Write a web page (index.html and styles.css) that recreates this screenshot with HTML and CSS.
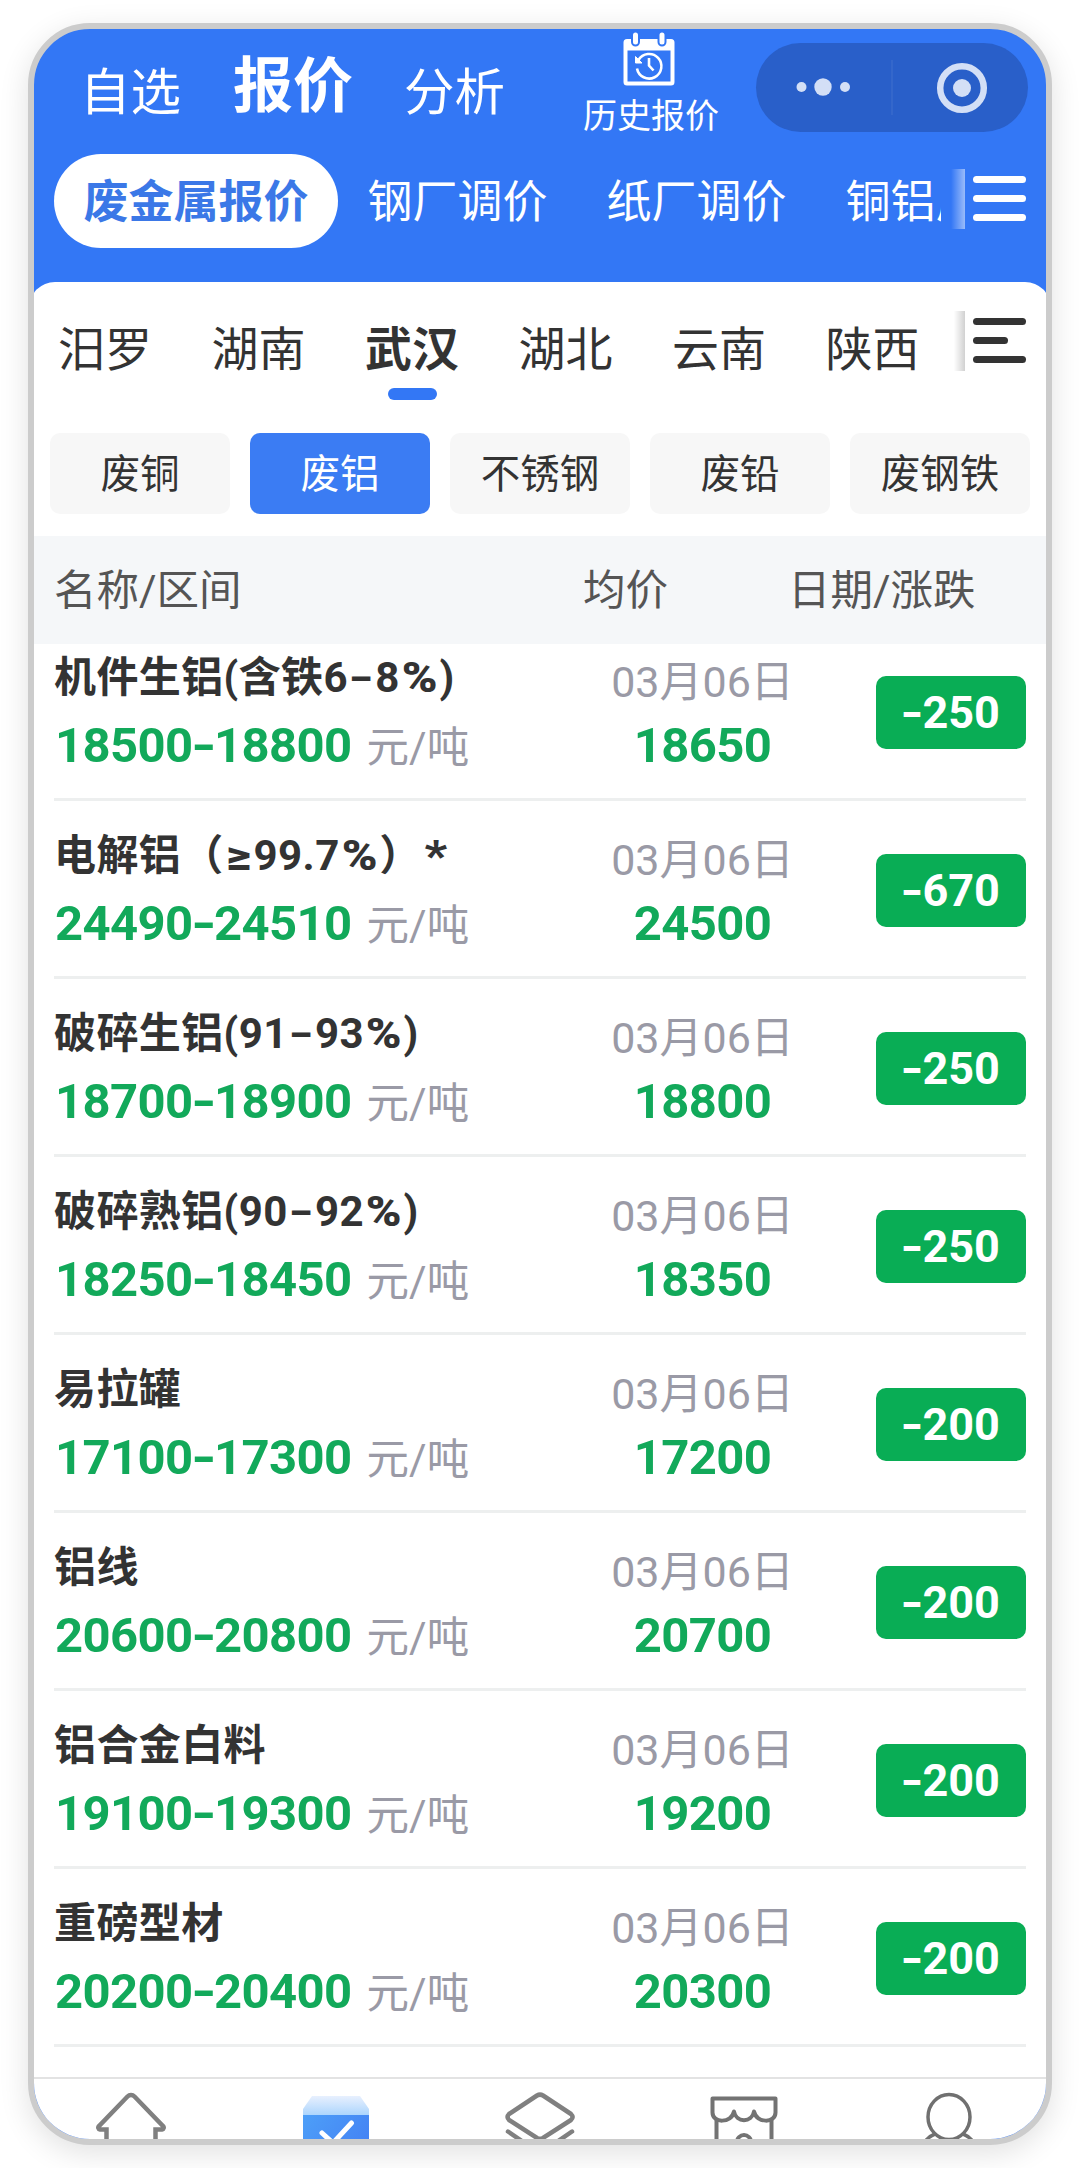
FILE: index.html
```
<!DOCTYPE html>
<html lang="zh-CN">
<head>
    <meta charset="UTF-8">
    <meta name="viewport" content="width=device-width, initial-scale=1.0">
    <title>报价</title>
    <link rel="stylesheet" href="styles.css">
</head>
<body>
    <div class="phone">
        <div class="header">
            <div class="nav">
                <span class="navItem first">自选</span>
                <span class="navItem active">报价</span>
                <span class="navItem">分析</span>
                <div class="history">
                    <svg width="52" height="54" viewBox="0 0 52 54">
                        <path d="M4 7h44a3.500 3.500 0 0 1 3.500 3.500V50a3.500 3.500 0 0 1-3.500 3.500H4A3.500 3.500 0 0 1 .5 50V10.500A3.500 3.500 0 0 1 4 7z" fill="#fff"/>
                        <path d="M4.500 18.500h43v31h-43z" fill="#3377f5"/>
                        <path d="M12.500 4v6M39 4v6" stroke="#3377f5" stroke-width="9" stroke-linecap="round"/>
                        <path d="M12.500 3v7M39 3v7" stroke="#fff" stroke-width="5" stroke-linecap="round"/>
                        <path d="M15.500 28A12.300 12.300 0 1 1 14 36.500" fill="none" stroke="#fff" stroke-width="2.600"/>
                        <path d="M12.500 24.500v6.500h6.500z" fill="#fff" stroke="#fff"/>
                        <path d="M26 26v7.500l4.500 5" fill="none" stroke="#fff" stroke-width="2.600"/>
                    </svg>
                    <span>历史报价</span>
                </div>
                <div class="capsule">
                    <svg width="272" height="88" viewBox="0 0 272 88">
                        <g fill="#d3dff6">
                            <circle cx="45.500" cy="44" r="5"/>
                            <circle cx="67" cy="44" r="8.700"/>
                            <circle cx="89" cy="44" r="5"/>
                            <circle cx="206" cy="45" r="9"/>
                        </g>
                        <path d="M136 17v55" stroke="#3467cb" stroke-width="2"/>
                        <circle cx="206" cy="45" r="21.800" fill="none" stroke="#d3dff6" stroke-width="6.500"/>
                    </svg>
                </div>
            </div>
            <div class="types">
                <div class="typeList">
                    <span class="type active">废金属报价</span>
                    <span class="type">钢厂调价</span>
                    <span class="type">纸厂调价</span>
                    <span class="type">铜铝厂调价</span>
                </div>
                <div class="fade"></div>
                <div class="menu"><i></i><i></i><i></i></div>
            </div>
        </div>

        <div class="panel">
            <div class="cities">
                <div class="cityList">
                    <span>汨罗</span>
                    <span>湖南</span>
                    <span class="active">武汉</span>
                    <span>湖北</span>
                    <span>云南</span>
                    <span>陕西</span>
                </div>
                <div class="fade dark"></div>
                <div class="menu dark"><i></i><i class="short"></i><i></i></div>
            </div>
            <div class="metals">
                <span>废铜</span>
                <span class="active">废铝</span>
                <span>不锈钢</span>
                <span>废铅</span>
                <span>废钢铁</span>
            </div>
            <div class="thead">
                <span class="colName">名称/区间</span>
                <span class="colAvg">均价</span>
                <span>日期/涨跌</span>
            </div>
            <div class="list" id="list"></div>
        </div>

        <div class="tabbar">
            <svg width="80" height="80" viewBox="0 0 80 80">
                <path d="M15.500 60V40.500H9a2 2 0 0 1-1-3.500L36.500 7.500a5 5 0 0 1 7 0L72 37a2 2 0 0 1-1 3.500h-6.500V60" fill="none" stroke="#808080" stroke-width="4.500"/>
            </svg>
            <svg width="80" height="80" viewBox="0 0 80 80">
                <defs>
                    <linearGradient id="lid" x1="0" y1="0" x2="0" y2="1">
                        <stop offset="0" stop-color="#e8f0fe"/>
                        <stop offset="1" stop-color="#a9d4fd"/>
                    </linearGradient>
                    <linearGradient id="box" x1="0" y1="0" x2="1" y2="0.500">
                        <stop offset="0" stop-color="#4d9ff8"/>
                        <stop offset="1" stop-color="#4584f4"/>
                    </linearGradient>
                </defs>
                <path d="M16 7h48l9 13v7H7v-7z" fill="url(#lid)"/>
                <path d="M7 26h66v45H7z" fill="url(#box)"/>
                <path d="M26 44l11 10 18.500-20" fill="none" stroke="#fff" stroke-width="5" stroke-linecap="round"/>
            </svg>
            <svg width="80" height="80" viewBox="0 0 80 80">
                <g fill="none" stroke="#808080" stroke-width="4.500" stroke-linecap="round" stroke-linejoin="round">
                    <path d="M37 6.500a6 6 0 0 1 6 0L71 25q3 3 0 6L43 49a6 6 0 0 1-6 0L9 31q-3-3 0-6z"/>
                    <path d="M8 42.500l29 20a6 6 0 0 0 6 0l29-20"/>
                </g>
            </svg>
            <svg width="80" height="80" viewBox="0 0 80 80">
                <g fill="none" stroke="#737373" stroke-width="4" stroke-linejoin="round">
                    <path d="M8.500 9.500h63v14c0 11-19 11-21.500-1-2 11.500-18 11.500-20 0-2.500 12-21.500 12-21.500 1z"/>
                    <path d="M12.500 31v34M67.500 31v34"/>
                    <path d="M33 60v-7a7 7 0 0 1 14 0v7"/>
                </g>
            </svg>
            <svg width="80" height="80" viewBox="0 0 80 80">
                <g fill="none" stroke="#707070" stroke-width="3.500">
                    <ellipse cx="40" cy="28" rx="21" ry="22.500"/>
                    <path d="M26 45Q18 48 13 57M54 45q8 3 13 12"/>
                </g>
            </svg>
        </div>
    </div>

    <script>
        let data = [
            { name: '机件生铝(含铁6-8%)', low: 18500, high: 18800, avg: 18650, change: 250 },
            { name: '电解铝（≥99.7%）*', low: 24490, high: 24510, avg: 24500, change: 670 },
            { name: '破碎生铝(91-93%)', low: 18700, high: 18900, avg: 18800, change: 250 },
            { name: '破碎熟铝(90-92%)', low: 18250, high: 18450, avg: 18350, change: 250 },
            { name: '易拉罐', low: 17100, high: 17300, avg: 17200, change: 200 },
            { name: '铝线', low: 20600, high: 20800, avg: 20700, change: 200 },
            { name: '铝合金白料', low: 19100, high: 19300, avg: 19200, change: 200 },
            { name: '重磅型材', low: 20200, high: 20400, avg: 20300, change: 200 }
        ];
        let dash = '<b class="dash">-</b>';
        let content = '';
        for(let x of data){
            let name = x.name.replace('-', dash).replace(/[%≥*]/g, '<b class="sign">$&</b>');
            content += `
                <div class="row">
                    <div class="info">
                        <p class="name">${name}</p>
                        <p class="range">${x.low}${dash}${x.high}<span class="unit">元/吨</span></p>
                    </div>
                    <div class="avg">
                        <p class="date">03月06日</p>
                        <p class="price">${x.avg}</p>
                    </div>
                    <div class="change">${dash}${x.change}</div>
                </div>
            `;
        }
        document.getElementById('list').innerHTML = content;
    </script>
</body>
</html>
```
FILE: styles.css
```
*{
    box-sizing: border-box;
}
body{
    margin: 0;
    padding: 23px 28px;
    background-color: white;
    font-family: Roboto, "Noto Sans CJK SC", sans-serif;
    color: #333;
}
p{
    margin: 0;
}
.phone{
    width: 1024px;
    height: 2122px;
    border: 6px solid #ccc;
    border-radius: 62px;
    overflow: hidden;
    display: flex;
    flex-direction: column;
    background-color: #3377f5;
    box-shadow: 0 8px 30px rgba(0, 0, 0, 0.12);
}
.header{
    height: 253px;
    flex-shrink: 0;
    color: white;
}
.nav{
    display: flex;
    height: 125px;
    padding-left: 46px;
}
.navItem{
    font-size: 50.5px;
    line-height: 60px;
    padding-top: 34px;
    margin-right: 53px;
}
.navItem.first{
    margin-right: 52px;
}
.navItem.active{
    font-size: 60px;
    font-weight: bold;
    padding-top: 28px;
    margin-right: 51px;
}
.history{
    width: 136px;
    margin-left: 25px;
    padding-top: 3px;
    display: flex;
    flex-direction: column;
    align-items: center;
    font-size: 34px;
    line-height: 40px;
}
.history svg{
    margin-bottom: 10px;
    margin-right: 4px;
}
.capsule{
    width: 272px;
    height: 89px;
    margin-top: 14px;
    margin-left: 37px;
    border-radius: 45px;
    background-color: #295fc9;
}
.types{
    display: flex;
    padding-left: 20px;
    height: 94px;
}
.typeList{
    width: 887px;
    display: flex;
    overflow: hidden;
    white-space: nowrap;
}
.type{
    flex-shrink: 0;
    padding: 0 29.5px;
    font-size: 45px;
    line-height: 98px;
    border-radius: 47px;
}
.type.active{
    background-color: white;
    color: #3b78e7;
    font-weight: bold;
}
.fade{
    width: 14px;
    height: 60px;
    margin-left: 10px;
    margin-top: 15px;
    background: linear-gradient(to right, rgba(255, 255, 255, 0), rgba(255, 255, 255, 0.5));
}
.menu{
    width: 53px;
    height: 45px;
    margin-top: 22px;
    margin-left: 8px;
    display: flex;
    flex-direction: column;
    justify-content: space-between;
}
.menu i{
    height: 7px;
    border-radius: 4px;
    background-color: white;
}
.panel{
    flex: 1;
    min-height: 0;
    margin: 0 -5px;
    padding: 0 5px;
    border-radius: 26px 26px 0 0;
    background-color: white;
    overflow: hidden;
}
.cities{
    display: flex;
    height: 151px;
    padding-left: 24px;
}
.cityList{
    display: flex;
    width: 883px;
    gap: 59.5px;
    font-size: 47px;
    line-height: 70px;
    padding-top: 33px;
}
.cityList .active{
    font-weight: bold;
}
.cityList .active::after{
    content: "";
    display: block;
    width: 49px;
    height: 12px;
    margin: 3px auto 0;
    border-radius: 6px;
    background-color: #3377f5;
}
.fade.dark{
    margin-top: 29px;
    background: linear-gradient(to right, rgba(0, 0, 0, 0) 20%, rgba(0, 0, 0, 0.18));
}
.menu.dark{
    margin-top: 36px;
}
.menu.dark i{
    background-color: #333;
}
.menu .short{
    width: 35px;
}
.metals{
    display: flex;
    gap: 20px;
    padding: 0 16px;
    height: 103px;
}
.metals span{
    flex: 1;
    height: 81px;
    border-radius: 10px;
    background-color: #f7f7f7;
    font-size: 39.5px;
    line-height: 83px;
    text-align: center;
}
.metals .active{
    background-color: #3b7cf3;
    color: white;
}
.thead{
    display: flex;
    height: 108px;
    margin: 0 -5px;
    padding-left: 25px;
    background-color: #f5f7f9;
    font-size: 42.5px;
    line-height: 110px;
    color: #555;
}
.colName{
    width: 529px;
}
.colAvg{
    width: 205px;
}
.list{
    height: 1434px;
    padding: 0 20px;
    overflow: hidden;
}
.row{
    display: flex;
    align-items: center;
    height: 178px;
    padding-top: 4px;
    border-bottom: 3px solid #edefef;
}
.row:first-child{
    margin-top: -21px;
}
.info{
    width: 556px;
}
.name{
    font-size: 42px;
    line-height: 68px;
    font-weight: bold;
    letter-spacing: 0.4px;
}
.range, .price{
    font-size: 49px;
    line-height: 68px;
    font-weight: bold;
    color: #12a95a;
    letter-spacing: -0.6px;
}
.range{
    padding-left: 1px;
}
.dash{
    display: inline-block;
    transform: scale(1.25, 0.85);
}
.name .dash{
    margin: 0 4px;
    transform: scale(1.5, 0.85);
}
.sign{
    display: inline-block;
    margin: 0 4px;
    transform: scaleX(1.15);
}
.unit{
    margin-left: 15px;
    font-size: 42.5px;
    font-weight: normal;
    color: #9a9aa6;
    letter-spacing: 0;
}
.avg{
    width: 185px;
    padding-top: 6px;
    text-align: center;
}
.date{
    font-size: 43px;
    line-height: 60px;
    color: #9a9aa6;
}
.change{
    width: 150px;
    height: 73px;
    margin-left: auto;
    border-radius: 10px;
    background-color: #09ad55;
    color: white;
    font-size: 45px;
    font-weight: bold;
    line-height: 73px;
    text-align: center;
}
.tabbar{
    display: flex;
    justify-content: space-around;
    height: 62px;
    flex-shrink: 0;
    margin: 0 -5px;
    padding-top: 10px;
    border-top: 2px solid #e3e3e3;
    background-color: white;
}
```
